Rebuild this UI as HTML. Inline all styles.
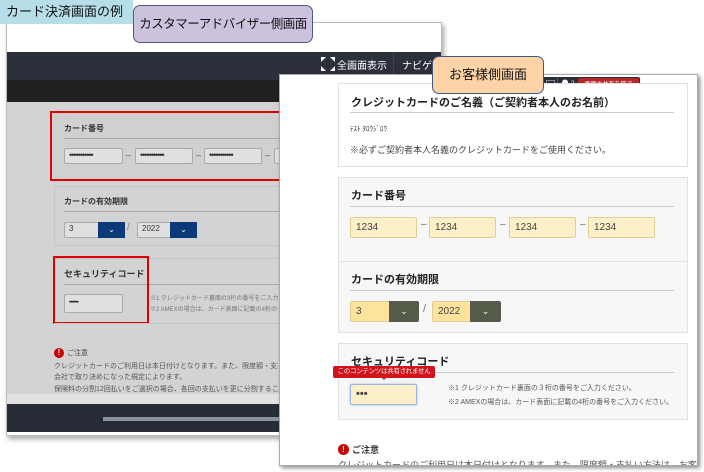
<!DOCTYPE html>
<html><head><meta charset="utf-8"><style>
*{box-sizing:border-box;margin:0;padding:0}
body{width:704px;height:472px;background:#fff;position:relative;overflow:hidden;font-family:"Liberation Sans","Noto Sans CJK JP",sans-serif;color:#333}
.a{position:absolute;white-space:nowrap}
.lw{left:6px;top:22px;width:436px;height:414px;background:#fff;border:1px solid #bbb;box-shadow:2px 3px 5px rgba(0,0,0,.35)}
.gin{position:absolute;height:16px;background:#e0e0e0;border:1px solid #aaa;border-radius:2px;font-size:9px;line-height:12px;padding-left:4px;color:#333;letter-spacing:-1px;overflow:hidden;white-space:nowrap}
.rb{position:absolute;border:2px solid #e00000}
.rs{position:absolute;border:1px solid #e2e2e2}
.yin{position:absolute;height:21px;background:#fdefc8;border:1px solid #e0cf94;border-radius:2px;font-size:10px;line-height:19px;padding-left:5px;color:#444}
.t{font-weight:bold;font-size:11px;color:#222}
.clip{overflow:hidden}
</style></head><body>
<div class="a lw"></div>
<div class="a" style="left:7px;top:52px;width:434px;height:28px;background:#2b303a"></div>
<div class="a" style="left:7px;top:80px;width:434px;height:22px;background:#202020"></div>
<div class="a" style="left:7px;top:102px;width:434px;height:292px;background:#d3d3d3"></div>
<div class="a" style="left:7px;top:394px;width:434px;height:10px;background:#e2e2e2"></div>
<div class="a" style="left:7px;top:404px;width:434px;height:28px;background:#282c36"></div>
<div class="a" style="left:103px;top:417px;width:180px;height:4px;background:#8a93a0"></div>
<svg class="a" style="left:320px;top:56px" width="16" height="16" viewBox="0 0 16 16"><rect width="16" height="16" fill="#2b303a"/><path d="M1 1h5L1 6zM15 1h-5l5 5zM1 15h5L1 10zM15 15h-5l5-5z" fill="#fff"/></svg>
<div class="a" style="left:337px;top:57px;font-size:10px;color:#fff">全画面表示</div>
<div class="a" style="left:393px;top:52px;width:1px;height:28px;background:#444"></div>
<div class="a" style="left:402px;top:57px;font-size:10px;color:#fff">ナビゲー</div>
<div class="a" style="left:53px;top:112px;width:240px;height:70px;background:#d0d0d0"></div>
<div class="a" style="left:64px;top:123px;font-size:8px;font-weight:bold;color:#333">カード番号</div>
<div class="a" style="left:64px;top:138px;width:230px;height:1px;background:#aaa"></div>
<div class="gin" style="left:64px;top:148px;width:59px">•••••••••••</div>
<div class="a" style="left:126px;top:150px;font-size:9px;color:#555">–</div>
<div class="gin" style="left:135px;top:148px;width:58px">•••••••••••</div>
<div class="a" style="left:196px;top:150px;font-size:9px;color:#555">–</div>
<div class="gin" style="left:204px;top:148px;width:58px">•••••••••••</div>
<div class="a" style="left:265px;top:150px;font-size:9px;color:#555">–</div>
<div class="gin" style="left:274px;top:148px;width:20px"></div>
<div class="rb" style="left:50px;top:111px;width:244px;height:70px;border-right:none"></div>
<div class="a" style="left:54px;top:186px;width:240px;height:60px;border:1px solid #c4c4c4"></div>
<div class="a" style="left:64px;top:196px;font-size:8px;font-weight:bold;color:#333">カードの有効期限</div>
<div class="a" style="left:64px;top:211px;width:230px;height:1px;background:#aaa"></div>
<div class="gin" style="left:64px;top:222px;width:36px;font-size:8px">3</div>
<div class="a" style="left:98px;top:222px;width:27px;height:16px;background:#0c3a78;color:#fff;font-size:8px;text-align:center;line-height:16px">⌄</div>
<div class="a" style="left:127px;top:222px;font-size:10px;color:#888">/</div>
<div class="gin" style="left:137px;top:222px;width:36px;font-size:8px;letter-spacing:0">2022</div>
<div class="a" style="left:170px;top:222px;width:27px;height:16px;background:#0c3a78;color:#fff;font-size:8px;text-align:center;line-height:16px">⌄</div>
<div class="a" style="left:54px;top:258px;width:240px;height:1px;background:#c4c4c4"></div>
<div class="a" style="left:64px;top:267px;font-size:9px;font-weight:bold;color:#333">セキュリティコード</div>
<div class="a" style="left:64px;top:284px;width:230px;height:1px;background:#aaa"></div>
<div class="gin" style="left:64px;top:294px;width:59px;height:19px;letter-spacing:-1.5px;font-size:6px;line-height:16px">••••••••••••••</div>
<div class="rb" style="left:53px;top:256px;width:96px;height:68px"></div>
<div class="a clip" style="left:150px;top:293px;width:128px;font-size:6px;color:#777">※1 クレジットカード裏面の3桁の番号をご入力く</div>
<div class="a clip" style="left:150px;top:304px;width:128px;font-size:6px;color:#777">※2 AMEXの場合は、カード表面に記載の4桁の番号</div>
<div class="a" style="left:54px;top:323px;width:240px;height:1px;background:#c4c4c4"></div>
<div class="a" style="left:54px;top:348px;width:10px;height:10px;border-radius:50%;background:#c00;color:#fff;font-size:8px;text-align:center;line-height:10px;font-weight:bold">!</div>
<div class="a" style="left:67px;top:348px;font-size:7px;color:#444">ご注意</div>
<div class="a clip" style="left:54px;top:361px;width:224px;font-size:7px;color:#555">クレジットカードのご利用日は本日付けとなります。また、限度額・支払い</div>
<div class="a clip" style="left:54px;top:372px;width:224px;font-size:7px;color:#555">会社で取り決めになった規定によります。</div>
<div class="a clip" style="left:54px;top:384px;width:224px;font-size:7px;color:#555">保険料の分割12回払いをご選択の場合、各回の支払いを更に分割することは</div>
<div class="a" style="left:0;top:0;width:133px;height:24px;background:#b5dee8;font-size:13px;line-height:24px;padding-left:6px;color:#111">カード決済画面の例</div>
<div class="a" style="left:133px;top:5px;width:180px;height:38px;background:#cdc2de;border:1px solid #4b5a80;border-radius:7px;font-size:12.5px;line-height:36px;text-align:center;color:#111;letter-spacing:-0.5px">カスタマーアドバイザー側画面</div>
<!-- right window -->
<div class="a clip" style="left:279px;top:74px;width:419px;height:392px;background:#fff;border:1px solid #aaa;box-shadow:2px 2px 4px rgba(0,0,0,.45)">
<div style="position:absolute;left:58px;top:384px;font-size:9px;color:#555;white-space:nowrap;line-height:12px">クレジットカードのご利用日は本日付けとなります。また、限度額・支払い方法は、お客さまとカード</div>
</div>
<div class="a" style="left:536px;top:77px;width:104px;height:17px;background:#2a2e38;border-radius:2px"></div>
<div class="a" style="left:546px;top:80px;width:9px;height:8px;border:1px solid #888"></div>
<div class="a" style="left:557px;top:77px;width:1px;height:17px;background:#555"></div>
<svg class="a" style="left:560px;top:79px" width="10" height="12" viewBox="0 0 10 12"><circle cx="5" cy="3.5" r="3" fill="#fff"/><path d="M0 12c0-4 2-5 5-5s5 1 5 5z" fill="#fff"/></svg>
<div class="a" style="left:571px;top:81px;font-size:6px;color:#fff">2</div>
<div class="a" style="left:578px;top:78px;width:61px;height:15px;background:#b5262a;border-radius:2px;color:#fff;font-size:6px;line-height:15px;text-align:center">画面の共有を終了</div>
<div class="rs" style="left:338px;top:83px;width:350px;height:84px;background:#fff"></div>
<div class="a t" style="left:351px;top:94px">クレジットカードのご名義（ご契約者本人のお名前）</div>
<div class="a" style="left:350px;top:112px;width:324px;height:1px;background:#ccc"></div>
<div class="a" style="left:350px;top:124px;font-size:7px;color:#333">ﾃｽﾄ ﾀﾛｳｼﾞﾛｳ</div>
<div class="a" style="left:350px;top:143px;font-size:9px;color:#444">※必ずご契約者本人名義のクレジットカードをご使用ください。</div>
<div class="rs" style="left:338px;top:177px;width:350px;height:86px;background:#f7f7f7"></div>
<div class="a t" style="left:351px;top:187px">カード番号</div>
<div class="a" style="left:350px;top:206px;width:324px;height:1px;background:#ccc"></div>
<div class="yin" style="left:350px;top:217px;width:67px">1234</div>
<div class="a" style="left:421px;top:219px;font-size:10px;color:#666">–</div>
<div class="yin" style="left:429px;top:217px;width:67px">1234</div>
<div class="a" style="left:500px;top:219px;font-size:10px;color:#666">–</div>
<div class="yin" style="left:509px;top:217px;width:67px">1234</div>
<div class="a" style="left:580px;top:219px;font-size:10px;color:#666">–</div>
<div class="yin" style="left:588px;top:217px;width:67px">1234</div>
<div class="rs" style="left:338px;top:261px;width:350px;height:72px;background:#f7f7f7"></div>
<div class="a t" style="left:351px;top:271px">カードの有効期限</div>
<div class="a" style="left:350px;top:290px;width:324px;height:1px;background:#ccc"></div>
<div class="yin" style="left:350px;top:301px;width:40px;background:#fde39c">3</div>
<div class="a" style="left:389px;top:301px;width:30px;height:21px;background:#555c4a;border-radius:0 2px 2px 0;color:#fff;font-size:9px;line-height:20px;text-align:center">⌄</div>
<div class="a" style="left:423px;top:303px;font-size:11px;color:#777">/</div>
<div class="yin" style="left:432px;top:301px;width:40px;background:#fde39c">2022</div>
<div class="a" style="left:470px;top:301px;width:31px;height:21px;background:#555c4a;border-radius:0 2px 2px 0;color:#fff;font-size:9px;line-height:20px;text-align:center">⌄</div>
<div class="rs" style="left:338px;top:343px;width:350px;height:77px;background:#f7f7f7"></div>
<div class="a t" style="left:351px;top:353px">セキュリティコード</div>
<div class="a" style="left:350px;top:372px;width:324px;height:1px;background:#ccc"></div>
<div class="yin" style="left:350px;top:384px;width:67px;border-color:#9ab8e0;box-shadow:0 0 2px #9ab8e0;font-weight:bold;font-size:11px">•••</div>
<div class="a" style="left:333px;top:366px;width:102px;height:12px;background:#d0141c;border-radius:2px;color:#fff;font-size:6.5px;line-height:12px;text-align:center;letter-spacing:-0.3px">このコンテンツは共有されません</div>
<div class="a" style="left:381px;top:377px;width:0;height:0;border:3px solid transparent;border-top-color:#d0141c"></div>
<div class="a" style="left:448px;top:383px;font-size:7px;color:#555">※1 クレジットカード裏面の３桁の番号をご入力ください。</div>
<div class="a" style="left:448px;top:397px;font-size:7px;color:#555">※2 AMEXの場合は、カード表面に記載の4桁の番号をご入力ください。</div>
<div class="a" style="left:338px;top:444px;width:11px;height:11px;border-radius:50%;background:#c00;color:#fff;font-size:8px;text-align:center;line-height:11px;font-weight:bold">!</div>
<div class="a" style="left:352px;top:443px;font-size:9px;font-weight:bold;color:#333">ご注意</div>
<div class="a" style="left:432px;top:56px;width:112px;height:38px;background:#fed3a8;border:1px solid #3c5a80;border-radius:7px;font-size:13px;line-height:36px;text-align:center;color:#111">お客様側画面</div>
</body></html>
